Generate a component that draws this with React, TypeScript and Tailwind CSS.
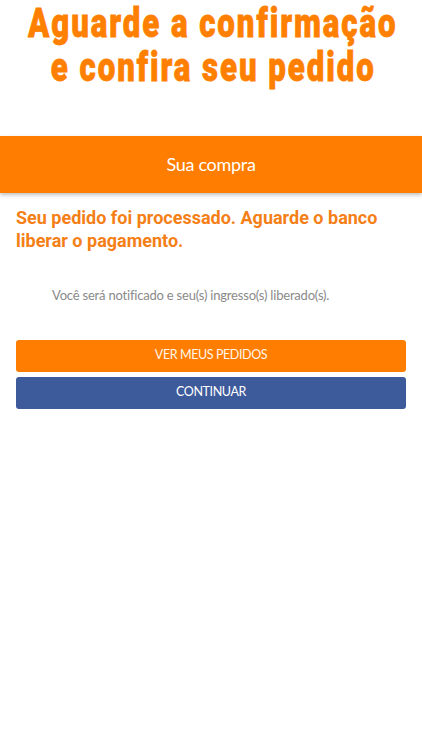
export default function App() {
  return (
    <div className="min-h-[750px] w-full bg-white">
      {/* Banner headline */}
      <div className="flex flex-col items-center pt-[2px] text-[#ff7f00] font-black leading-[44px] text-[40px] tracking-[2.5px] [font-family:Roboto,sans-serif] [-webkit-text-stroke:0.8px_#ff7f00]">
        <span className="translate-x-[2px] scale-x-[0.78] whitespace-nowrap">Aguarde a confirmação</span>
        <span className="translate-x-[2px] scale-x-[0.78] whitespace-nowrap">e confira seu pedido</span>
      </div>

      {/* Title bar */}
      <div className="mt-[46px] flex h-[57px] items-center justify-center bg-[#ff7d00] shadow-[0_2px_4px_rgba(0,0,0,0.25)]">
        <span className="text-[18px] tracking-[-0.3px] text-white [font-family:Lato,sans-serif]">Sua compra</span>
      </div>

      <div className="px-4">
        <h1 className="mt-[13px] text-[18px] font-bold leading-[23px] text-[#f57f17] [font-family:Roboto,sans-serif]">
          Seu pedido foi processado. Aguarde o banco liberar o pagamento.
        </h1>

        <p className="mt-[34px] pl-9 text-[13px] tracking-[-0.2px] text-[#8a8a8a] [font-family:Lato,sans-serif]">
          Você será notificado e seu(s) ingresso(s) liberado(s).
        </p>

        <div className="mt-[34px] flex flex-col gap-[5px]">
          <button className="h-8 w-full rounded-[3px] bg-[#ff7d00] text-[12.5px] tracking-[-0.4px] text-[#fff5e8] [font-family:Lato,sans-serif]">
            VER MEUS PEDIDOS
          </button>
          <button className="h-8 w-full rounded-[3px] bg-[#3d5a9b] text-[12.5px] tracking-[-0.4px] text-white [font-family:Lato,sans-serif]">
            CONTINUAR
          </button>
        </div>
      </div>
    </div>
  );
}
